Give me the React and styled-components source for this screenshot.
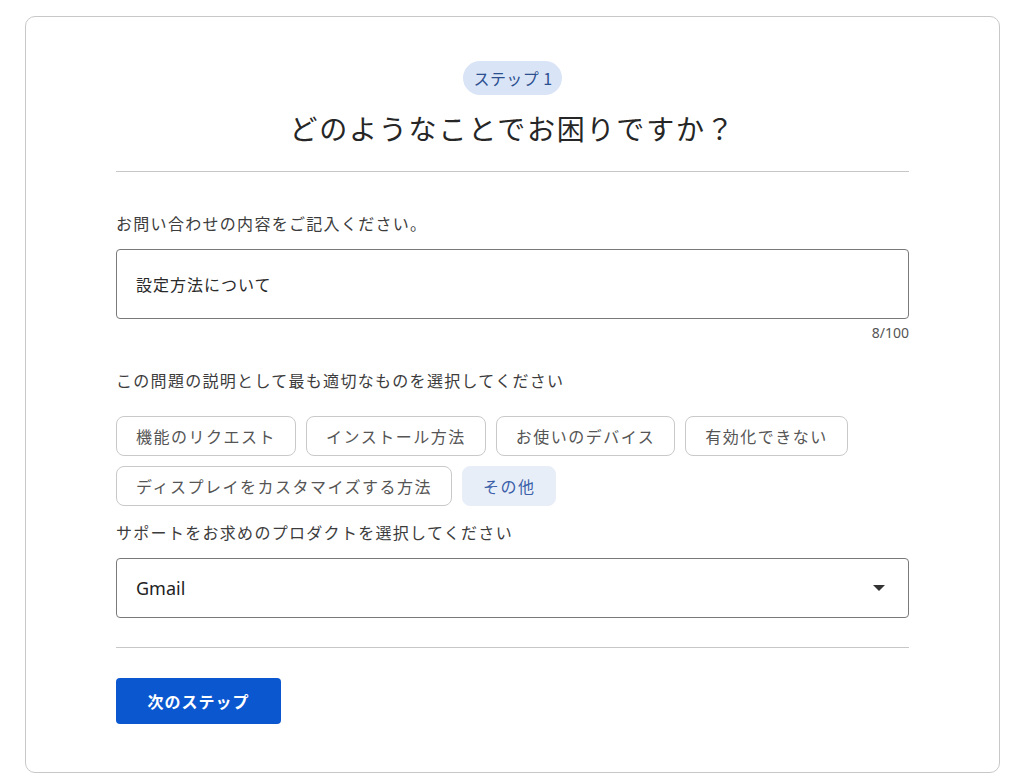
import { useState } from "react";
import styled, { createGlobalStyle } from "styled-components";

const GlobalStyle = createGlobalStyle`
  html, body {
    margin: 0;
    padding: 0;
    background: #ffffff;
  }
  body {
    font-family: "Noto Sans CJK JP", "Noto Sans", sans-serif;
    color: #1f1f1f;
  }
  * {
    box-sizing: border-box;
  }
`;

const Style = {
  Page: styled.div`
    padding: 16px 24px 6px 25px;
  `,
  Card: styled.div`
    border: 1px solid #c8c8c8;
    border-radius: 10px;
    padding: 44px 90px 48px;
    display: flex;
    flex-direction: column;
  `,
  Header: styled.div`
    display: flex;
    flex-direction: column;
    align-items: center;
  `,
  StepBadge: styled.span`
    height: 34px;
    padding: 0 10px 0 11px;
    display: flex;
    align-items: center;
    border-radius: 17px;
    background: #d9e4f7;
    color: #2c4f8f;
    font-size: 16px;
    letter-spacing: 0.4px;
  `,
  Title: styled.h1`
    margin: 13px 0 0;
    font-size: 28px;
    line-height: 40px;
    font-weight: 400;
    letter-spacing: 1.8px;
    color: #262626;
  `,
  Divider: styled.hr`
    width: 100%;
    margin: ${(p) => p.$top}px 0 0;
    border: none;
    border-top: 1px solid #c7c7c7;
  `,
  Label: styled.div`
    margin-top: ${(p) => p.$top}px;
    font-size: 16px;
    line-height: 24px;
    letter-spacing: 1.3px;
    color: #3c3c3c;
  `,
  TextField: styled.div`
    margin-top: 14px;
    height: 70px;
    border: 1px solid #7a7a7a;
    border-radius: 4px;
    padding: 0 19px;
    display: flex;
    align-items: center;
    font-size: 16px;
    letter-spacing: 1px;
    color: #2a2a2a;
  `,
  Counter: styled.div`
    margin-top: 5px;
    text-align: right;
    font-family: "Noto Sans", "Noto Sans CJK JP", sans-serif;
    font-size: 14px;
    line-height: 18px;
    color: #555555;
  `,
  ChipList: styled.div`
    margin-top: 24px;
    display: flex;
    flex-wrap: wrap;
    gap: 10px 10px;
  `,
  Chip: styled.button`
    height: 40px;
    padding: 0 ${(p) => (p.$selected ? 20 : 19)}px;
    border: 1px solid ${(p) => (p.$selected ? "#e8eef8" : "#c9c9c9")};
    border-radius: 8px;
    background: ${(p) => (p.$selected ? "#e8eef8" : "#ffffff")};
    color: ${(p) => (p.$selected ? "#3a5ea8" : "#555555")};
    font-family: "Noto Sans CJK JP", sans-serif;
    font-size: 16px;
    letter-spacing: 1.5px;
    cursor: pointer;
  `,
  Select: styled.div`
    margin-top: 14px;
    height: 60px;
    border: 1px solid #7a7a7a;
    border-radius: 4px;
    padding: 0 23px 0 19px;
    display: flex;
    align-items: center;
    justify-content: space-between;
    cursor: pointer;
  `,
  SelectValue: styled.span`
    font-family: "Noto Sans", "Noto Sans CJK JP", sans-serif;
    font-size: 18px;
    color: #222222;
  `,
  Caret: styled.span`
    width: 0;
    height: 0;
    border-left: 6px solid transparent;
    border-right: 6px solid transparent;
    border-top: 6px solid #333333;
  `,
  Footer: styled.div`
    margin-top: 30px;
    display: flex;
  `,
  PrimaryButton: styled.button`
    height: 46px;
    width: 165px;
    border: none;
    border-radius: 4px;
    background: #0b57d0;
    color: #ffffff;
    font-family: "Noto Sans CJK JP", sans-serif;
    font-size: 16px;
    font-weight: 700;
    letter-spacing: 1px;
    cursor: pointer;
  `,
};

const CATEGORIES = [
  "機能のリクエスト",
  "インストール方法",
  "お使いのデバイス",
  "有効化できない",
  "ディスプレイをカスタマイズする方法",
  "その他",
];

const App = () => {
  const [selected, setSelected] = useState("その他");
  const text = "設定方法について";

  return (
    <>
      <GlobalStyle />
      <Style.Page>
        <Style.Card>
          <Style.Header>
            <Style.StepBadge>ステップ 1</Style.StepBadge>
            <Style.Title>どのようなことでお困りですか？</Style.Title>
          </Style.Header>
          <Style.Divider $top={23} />

          <Style.Label $top={39}>お問い合わせの内容をご記入ください。</Style.Label>
          <Style.TextField>{text}</Style.TextField>
          <Style.Counter>{text.length}/100</Style.Counter>

          <Style.Label $top={26}>この問題の説明として最も適切なものを選択してください</Style.Label>
          <Style.ChipList>
            {CATEGORIES.map((c) => (
              <Style.Chip key={c} $selected={selected === c} onClick={() => setSelected(c)}>
                {c}
              </Style.Chip>
            ))}
          </Style.ChipList>

          <Style.Label $top={14}>サポートをお求めのプロダクトを選択してください</Style.Label>
          <Style.Select>
            <Style.SelectValue>Gmail</Style.SelectValue>
            <Style.Caret />
          </Style.Select>

          <Style.Divider $top={29} />
          <Style.Footer>
            <Style.PrimaryButton>次のステップ</Style.PrimaryButton>
          </Style.Footer>
        </Style.Card>
      </Style.Page>
    </>
  );
};

export default App;
